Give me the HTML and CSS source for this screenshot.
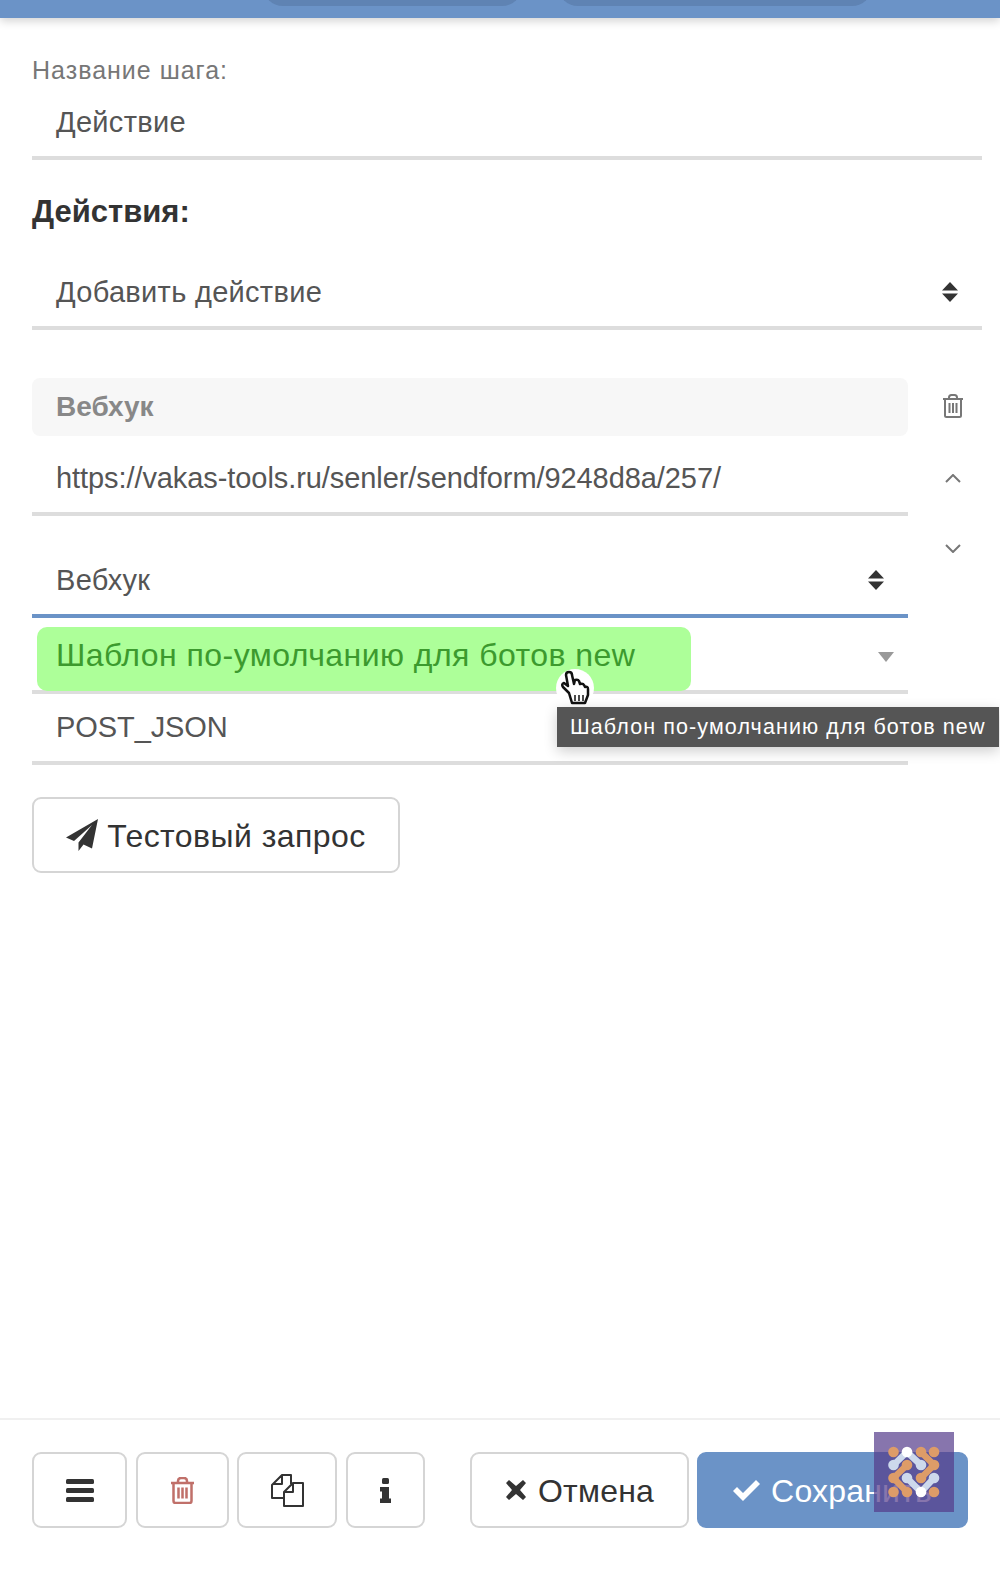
FILE: index.html
```html
<!DOCTYPE html>
<html lang="ru">
<head>
    <meta charset="UTF-8">
    <meta name="viewport" content="width=device-width, initial-scale=1.0">
    <title>Действие</title>
    <link rel="stylesheet" href="styles.css">
</head>
<body>
    <div class="page">
        <div class="topbar">
            <div class="tab tab-first"></div>
            <div class="tab tab-second"></div>
        </div>

        <div class="content">
            <div class="field-label">Название шага:</div>
            <div class="field">Действие</div>

            <div class="section-title">Действия:</div>

            <div class="field field-select">
                <span>Добавить действие</span>
                <svg class="sort-icon" viewBox="0 0 16 20"><path d="M8 0l8 8.500H0zM8 20l8-8.500H0z"/></svg>
            </div>

            <div class="action">
                <div class="action-main">
                    <div class="action-title">Вебхук</div>
                    <div class="field field-latin">https://vakas-tools.ru/senler/sendform/9248d8a/257/</div>
                    <div class="field field-select field-active">
                        <span>Вебхук</span>
                        <svg class="sort-icon" viewBox="0 0 16 20"><path d="M8 0l8 8.500H0zM8 20l8-8.500H0z"/></svg>
                    </div>
                    <div class="field field-tags">
                        <div class="tag">Шаблон по-умолчанию для ботов new</div>
                        <svg class="caret-icon" viewBox="0 0 16 10"><path d="M0 0h16l-8 10z"/></svg>
                    </div>
                    <div class="field field-latin field-short">POST_JSON</div>
                    <button class="btn btn-test">
                        <svg class="plane-icon" viewBox="0 0 32 32"><path d="M32 0L0 18.500l8 3.500L26 6 12.500 23.500V32l5-6.500 8.500 4z"/></svg>
                        <span class="btn-text">Тестовый запрос</span>
                    </button>
                </div>
                <div class="action-side">
                    <svg class="side-icon side-trash" viewBox="0 0 22 24"><path d="M1 5h20M7 5V3.500Q7 1 9.500 1h3Q15 1 15 3.500V5M3 5v16.500Q3 23 4.500 23h13q1.500 0 1.500-1.500V5M7.500 9v10M11 9v10M14.500 9v10"/></svg>
                    <svg class="side-icon side-chevron" viewBox="0 0 16 9"><path d="M1 8l7-7 7 7"/></svg>
                    <svg class="side-icon side-chevron" viewBox="0 0 16 9"><path d="M1 1l7 7 7-7"/></svg>
                </div>
            </div>
        </div>

        <div class="footer">
            <button class="btn btn-icon btn-menu">
                <svg class="bars-icon" viewBox="0 0 28 23"><rect width="28" height="5" rx="1.500"/><rect y="9" width="28" height="5" rx="1.500"/><rect y="18" width="28" height="5" rx="1.500"/></svg>
            </button>
            <button class="btn btn-icon btn-delete">
                <svg class="trash-icon" viewBox="0 0 25 27"><path d="M1 6h23M8 6V4q0-3 3-3h3q3 0 3 3v2M3.500 6v18q0 2 2 2h14q2 0 2-2V6M8.500 10.500v11M12.500 10.500v11M16.500 10.500v11"/></svg>
            </button>
            <button class="btn btn-icon btn-copy">
                <svg class="copy-icon" viewBox="0 0 33 33"><path d="M13 24H1V11L11 1h9v9M11 2v8H2M13 32V18l9-9h10v23zM22 10v8h-8"/></svg>
            </button>
            <button class="btn btn-icon btn-info">
                <svg class="info-icon" viewBox="0 0 11 25"><rect x="2" width="7" height="6" rx="1.500"/><path d="M1 9h8v11.500h2V25H0v-4.500h2v-7H0V9z"/></svg>
            </button>
            <button class="btn btn-cancel">
                <svg class="times-icon" viewBox="0 0 22 22"><path d="M4 1L11 7l7-6 3 3-6 7 6 7-3 3-7-6-7 6-3-3 6-7-6-7z"/></svg>
                <span class="btn-text">Отмена</span>
            </button>
            <button class="btn btn-save">
                <svg class="check-icon" viewBox="0 0 27 21"><path d="M10 21L0 11l4-4 6 6L23 0l4 4z"/></svg>
                <span class="btn-text">Сохранить</span>
            </button>
        </div>

        <div class="hand">
            <svg viewBox="0 0 30 36"><path d="M9 23L3 17q-2-3 1-4l4 3L6 5q0-3 3-3t3 3l2 9 1-4q3-1 4 1l1 3q3-1 4 1l1 2q3-1 3 2v6l-3 8H12z" fill="#fff" stroke="#111" stroke-width="2.500" stroke-linejoin="round"/><path d="M15 25v6M19 25v6M23 25v6" stroke="#111" stroke-width="1.500"/></svg>
        </div>

        <div class="tooltip">Шаблон по-умолчанию для ботов new</div>

        <svg class="logo" viewBox="0 0 80 80">
            <g class="logo-orange">
                <path d="M47 20L60 33 47 46M33 33L19.500 46 33 60"/>
                <circle cx="19.500" cy="20" r="5.300"/><circle cx="47" cy="20" r="5.300"/><circle cx="60" cy="20" r="5.300"/>
                <circle cx="33" cy="33" r="5.300"/><circle cx="60" cy="33" r="5.300"/>
                <circle cx="19.500" cy="46" r="5.300"/><circle cx="47" cy="46" r="5.300"/>
                <circle cx="19.500" cy="60" r="5.300"/><circle cx="33" cy="60" r="5.300"/><circle cx="60" cy="60" r="5.300"/>
            </g>
            <g class="logo-pale">
                <path d="M19.500 33L33 20 47 33M33 46L47 60 60 46"/>
                <circle cx="19.500" cy="33" r="5.300"/><circle cx="47" cy="33" r="5.300"/>
                <circle cx="33" cy="46" r="5.300"/><circle cx="60" cy="46" r="5.300"/>
            </g>
            <circle class="logo-white" cx="33" cy="20" r="5.300"/>
            <circle class="logo-white" cx="47" cy="60" r="5.300"/>
        </svg>
    </div>
</body>
</html>
```

FILE: styles.css
```css
* {
    box-sizing: border-box;
}
body {
    margin: 0;
    font-family: "Liberation Sans", Arial, sans-serif;
    background-color: #fff;
    color: #555;
}
.page {
    position: relative;
    width: 1000px;
    height: 1572px;
    overflow: hidden;
    display: flex;
    flex-direction: column;
}
.topbar {
    height: 18px;
    background-color: #6b93c7;
    box-shadow: 0 3px 10px rgba(0, 0, 0, 0.18);
    display: flex;
    align-items: flex-start;
    padding-left: 263px;
    gap: 36px;
    overflow: hidden;
}
.tab {
    height: 40px;
    margin-top: -34px;
    background-color: #5f83b3;
    border-radius: 0 0 20px 20px;
}
.tab-first {
    width: 259px;
}
.tab-second {
    width: 314px;
}
.content {
    flex: 1;
    padding: 35px 18px 0 32px;
}
.field-label {
    font-size: 25px;
    line-height: 34px;
    letter-spacing: 1px;
    margin-bottom: 1px;
    color: #777;
}
.field {
    height: 72px;
    padding: 0 24px;
    display: flex;
    align-items: center;
    justify-content: space-between;
    font-size: 29px;
    letter-spacing: 0.3px;
    border-bottom: 4px solid #ddd;
}
.field-latin {
    letter-spacing: -0.08px;
}
.field-active {
    border-bottom-color: #6b93c7;
}
.section-title {
    height: 98px;
    padding-top: 32px;
    font-size: 31px;
    line-height: 40px;
    font-weight: bold;
    color: #333;
}
.sort-icon {
    width: 16px;
    height: 20px;
    fill: #333;
}
.caret-icon {
    width: 16px;
    height: 10px;
    margin-top: 5px;
    margin-right: 9px;
    fill: #999;
}
.action {
    display: flex;
    margin-top: 48px;
}
.action-main {
    flex: none;
    width: 876px;
}
.action-side {
    flex: none;
    width: 90px;
    display: flex;
    flex-direction: column;
    align-items: center;
    padding: 16px 0 0 0;
}
.side-icon {
    fill: none;
    stroke: #777;
    stroke-width: 2;
}
.side-trash {
    width: 22px;
    height: 24px;
}
.side-chevron {
    width: 16px;
    height: 9px;
}
.side-trash + .side-chevron {
    margin-top: 56px;
}
.side-chevron + .side-chevron {
    margin-top: 61px;
}
.action-title {
    height: 58px;
    padding: 0 24px;
    display: flex;
    align-items: center;
    font-size: 28px;
    font-weight: bold;
    color: #888;
    background-color: #f7f7f7;
    border-radius: 8px;
    margin-bottom: 8px;
}
.action .field + .field-select {
    margin-top: 30px;
}
.field-tags {
    height: 76px;
    padding: 0 5px;
}
.tag {
    width: 654px;
    height: 64px;
    margin-top: 7px;
    margin-bottom: -3px;
    padding: 0 19px 7px;
    display: flex;
    align-items: center;
    font-size: 32px;
    letter-spacing: 0.45px;
    white-space: nowrap;
    color: #3c9a2e;
    background-color: #adff99;
    border-radius: 10px;
}
.field-short {
    height: 71px;
}
.btn {
    display: flex;
    align-items: center;
    justify-content: center;
    font-family: inherit;
    font-size: 32px;
    letter-spacing: 0.45px;
    color: #333;
    background-color: #fff;
    border: 2px solid #d5d5d5;
    border-radius: 9px;
    padding: 0;
}
.btn-text {
    padding-top: 2px;
}
.btn-test {
    width: 368px;
    height: 76px;
    margin-top: 32px;
    gap: 9px;
}
.plane-icon {
    width: 32px;
    height: 32px;
    fill: #333;
}
.footer {
    height: 154px;
    border-top: 2px solid #f0f0f0;
    padding: 32px 0 0 32px;
    display: flex;
    align-items: flex-start;
}
.footer .btn {
    height: 76px;
}
.btn-menu {
    width: 95px;
    margin-right: 9px;
}
.btn-delete {
    width: 93px;
    margin-right: 8px;
}
.btn-copy {
    width: 100px;
    margin-right: 9px;
}
.btn-info {
    width: 79px;
    margin-right: 45px;
}
.btn-cancel {
    width: 219px;
    margin-right: 8px;
    gap: 11px;
    letter-spacing: 0.2px;
}
.btn-save {
    width: 271px;
    gap: 11px;
    letter-spacing: 0.2px;
    color: #fff;
    background-color: #6b93c7;
    border-color: #6b93c7;
}
.bars-icon {
    width: 28px;
    height: 23px;
    fill: #333;
}
.trash-icon {
    width: 25px;
    height: 27px;
    fill: none;
    stroke: #c0706a;
    stroke-width: 2.500;
}
.copy-icon {
    width: 33px;
    height: 33px;
    fill: none;
    stroke: #333;
    stroke-width: 2;
    stroke-linejoin: round;
}
.info-icon {
    width: 11px;
    height: 25px;
    fill: #333;
}
.times-icon {
    width: 22px;
    height: 22px;
    fill: #333;
}
.check-icon {
    width: 27px;
    height: 21px;
    fill: #fff;
}
.tooltip {
    position: absolute;
    left: 557px;
    top: 707px;
    width: 442px;
    height: 40px;
    padding-left: 13px;
    display: flex;
    align-items: center;
    font-size: 21.500px;
    letter-spacing: 1.100px;
    white-space: nowrap;
    color: #fff;
    background-color: #555;
    box-shadow: 0 4px 14px rgba(0, 0, 0, 0.2);
}
.hand {
    position: absolute;
    left: 556px;
    top: 669px;
    width: 38px;
    height: 38px;
    padding: 1px 4px;
    background-color: #fff;
    border-radius: 50%;
}
.logo {
    position: absolute;
    left: 874px;
    top: 1432px;
    width: 80px;
    height: 80px;
    background-color: rgba(84, 58, 138, 0.7);
}
.logo path {
    fill: none;
    stroke-width: 6.500;
    stroke-linecap: round;
}
.logo-orange {
    fill: #dd9c68;
}
.logo-orange path {
    stroke: #dd9c68;
}
.logo-pale {
    fill: #cdd9ec;
}
.logo-pale path {
    stroke: #cdd9ec;
}
.logo-white {
    fill: #fff;
}
```
